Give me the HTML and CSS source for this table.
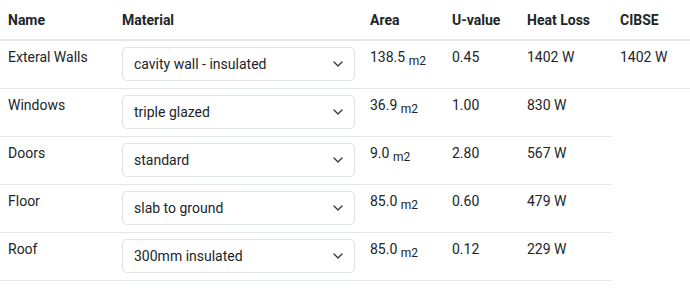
FILE: index.html
```html
<!DOCTYPE html>
<html lang="en">
<head>
<meta charset="utf-8">
<title>Heat loss</title>
<link rel="stylesheet" href="styles.css">
</head>
<body>
<table class="loss-table">
  <colgroup>
    <col class="c-name"><col class="c-mat"><col class="c-area"><col class="c-u"><col class="c-loss"><col class="c-cibse">
  </colgroup>
  <thead>
    <tr><th>Name</th><th>Material</th><th>Area</th><th>U-value</th><th>Heat Loss</th><th>CIBSE</th></tr>
  </thead>
  <tbody>
    <tr>
      <td>Exteral Walls</td>
      <td class="mat"><div class="select-wrap"><select class="select"><option>cavity wall - insulated</option></select><svg class="chev" viewBox="0 0 10 6" width="10" height="6"><path d="M1 1l4 4 4-4" fill="none" stroke="#333" stroke-width="1.3" stroke-linecap="round" stroke-linejoin="round"/></svg></div></td>
      <td>138.5 <sub>m2</sub></td><td>0.45</td><td>1402 W</td><td>1402 W</td>
    </tr>
    <tr>
      <td>Windows</td>
      <td class="mat"><div class="select-wrap"><select class="select"><option>triple glazed</option></select><svg class="chev" viewBox="0 0 10 6" width="10" height="6"><path d="M1 1l4 4 4-4" fill="none" stroke="#333" stroke-width="1.3" stroke-linecap="round" stroke-linejoin="round"/></svg></div></td>
      <td>36.9 <sub>m2</sub></td><td>1.00</td><td>830 W</td>
    </tr>
    <tr>
      <td>Doors</td>
      <td class="mat"><div class="select-wrap"><select class="select"><option>standard</option></select><svg class="chev" viewBox="0 0 10 6" width="10" height="6"><path d="M1 1l4 4 4-4" fill="none" stroke="#333" stroke-width="1.3" stroke-linecap="round" stroke-linejoin="round"/></svg></div></td>
      <td>9.0 <sub>m2</sub></td><td>2.80</td><td>567 W</td>
    </tr>
    <tr>
      <td>Floor</td>
      <td class="mat"><div class="select-wrap"><select class="select"><option>slab to ground</option></select><svg class="chev" viewBox="0 0 10 6" width="10" height="6"><path d="M1 1l4 4 4-4" fill="none" stroke="#333" stroke-width="1.3" stroke-linecap="round" stroke-linejoin="round"/></svg></div></td>
      <td>85.0 <sub>m2</sub></td><td>0.60</td><td>479 W</td>
    </tr>
    <tr>
      <td>Roof</td>
      <td class="mat"><div class="select-wrap"><select class="select"><option>300mm insulated</option></select><svg class="chev" viewBox="0 0 10 6" width="10" height="6"><path d="M1 1l4 4 4-4" fill="none" stroke="#333" stroke-width="1.3" stroke-linecap="round" stroke-linejoin="round"/></svg></div></td>
      <td>85.0 <sub>m2</sub></td><td>0.12</td><td>229 W</td>
    </tr>
  </tbody>
</table>
</body>
</html>
```
FILE: styles.css
```css
html, body {
  margin: 0;
  padding: 0;
  background: #fff;
}
body {
  font-family: Roboto, "Liberation Sans", sans-serif;
  font-size: 14px;
  line-height: 21px;
  color: #212529;
}
.loss-table {
  border-collapse: collapse;
  table-layout: fixed;
  width: 690px;
}
.c-name { width: 114px; }
.c-mat { width: 248px; }
.c-area { width: 82px; }
.c-u { width: 75px; }
.c-loss { width: 93px; }
.c-cibse { width: 78px; }
.loss-table th {
  text-align: left;
  font-weight: 700;
  padding: 10px 8px 8px;
  border-bottom: 2px solid #e4e7ea;
  vertical-align: bottom;
}
.loss-table td {
  padding: 6px 8px 8px;
  vertical-align: top;
  border-bottom: 1px solid #e4e7ea;
  white-space: nowrap;
}
.loss-table td.mat {
  padding: 6px 6px 7px 8px;
}
.loss-table sub {
  font-size: 12px;
  vertical-align: -3px;
  line-height: 0;
}
.select-wrap {
  position: relative;
  width: 233px;
}
.select {
  appearance: none;
  -webkit-appearance: none;
  display: block;
  box-sizing: border-box;
  width: 100%;
  height: 34px;
  margin: 0;
  padding: 6px 30px 6px 11px;
  font-family: Roboto, "Liberation Sans", sans-serif;
  font-size: 14px;
  line-height: 21px;
  color: #212529;
  background: #fff;
  border: 1px solid #dfe2e6;
  border-radius: 5px;
}
.chev {
  position: absolute;
  right: 12px;
  top: 14px;
  pointer-events: none;
}
```
